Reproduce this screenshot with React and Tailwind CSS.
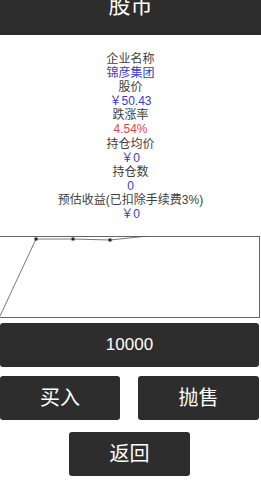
import React from "react";

function Row({ children, className }) {
  return <div className={"h-[14.1px] leading-[14.1px] text-[12px] " + className}>{children}</div>;
}

export default function App() {
  return (
    <div className="w-[261px] h-[483px] bg-white overflow-hidden relative" style={{ fontFamily: '"Liberation Sans", "Noto Sans CJK SC", sans-serif' }}>
      <div className="h-[35px] bg-[#2d2d2d] flex justify-center overflow-hidden">
        <div className="text-[22px] leading-[22px] text-white mt-[-5px]">股市</div>
      </div>
      <div className="flex flex-col items-center mt-[17px]">
        <Row className="text-[#404040]">企业名称</Row>
        <Row className="text-[#3b3bc4]">锦彦集团</Row>
        <Row className="text-[#404040]">股价</Row>
        <Row className="text-[#3b3bc4]">￥50.43</Row>
        <Row className="text-[#404040]">跌涨率</Row>
        <Row className="text-[#d94848]">4.54%</Row>
        <Row className="text-[#404040]">持仓均价</Row>
        <Row className="text-[#3b3bc4]">￥0</Row>
        <Row className="text-[#404040]">持仓数</Row>
        <Row className="text-[#3b3bc4]">0</Row>
        <Row className="text-[#404040]">预估收益(已扣除手续费3%)</Row>
        <Row className="text-[#3b3bc4]">￥0</Row>
      </div>
      <div className="mt-[15px] ml-[-1px] w-[261px] h-[82px] border border-[#666] relative">
        <svg width="261" height="82" className="absolute left-[-1px] top-[-1px]">
          <polyline points="1,80 37,3 74,3 111,4 149,0" fill="none" stroke="#555" strokeWidth="0.8" />
          <rect x="35.5" y="1.5" width="3" height="3" fill="#222" />
          <rect x="72.5" y="1.5" width="3" height="3" fill="#222" />
          <rect x="109.5" y="2.5" width="3" height="3" fill="#222" />
        </svg>
      </div>
      <div className="mt-[5px] w-[259px] h-[44px] bg-[#2d2d2d] rounded-[3px] flex items-center justify-center text-white text-[17px]">
        10000
      </div>
      <div className="mt-[9px] flex w-[259px] justify-between">
        <div className="w-[120px] h-[44px] bg-[#2d2d2d] rounded-[3px] flex items-center justify-center text-white text-[20px]">买入</div>
        <div className="w-[121px] h-[44px] bg-[#2d2d2d] rounded-[3px] flex items-center justify-center text-white text-[20px]">抛售</div>
      </div>
      <div className="mt-[12px] flex justify-center w-[259px]">
        <div className="w-[121px] h-[44px] bg-[#2d2d2d] rounded-[3px] flex items-center justify-center text-white text-[20px]">返回</div>
      </div>
    </div>
  );
}
